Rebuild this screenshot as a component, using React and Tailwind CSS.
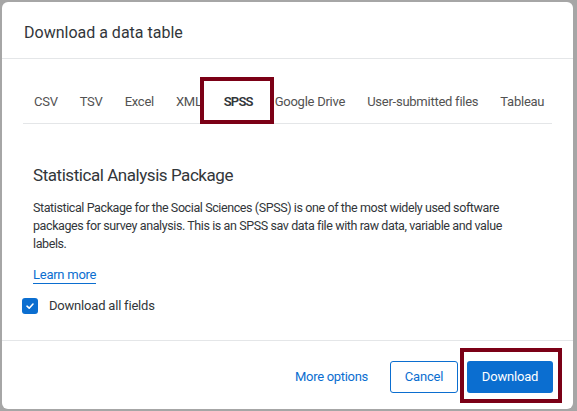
import React from 'react';

const tabs = ['CSV', 'TSV', 'Excel', 'XML', 'SPSS', 'Google Drive', 'User-submitted files', 'Tableau'];

export default function App() {
  return (
    <div className="w-[577px] h-[411px] bg-[#a6a6a6] p-[2px] pr-[4px] font-['Roboto',sans-serif] text-[#32363a]">
      <div className="relative w-full h-full bg-white rounded-[6px] flex flex-col overflow-hidden">
        {/* header */}
        <div className="h-[57px] border-b border-[#e4e6e8] flex items-center pl-[22px] pt-[6px]">
          <h1 className="text-[16px] leading-none text-[#32363a]">Download a data table</h1>
        </div>

        {/* tabs */}
        <div className="px-[21px] pt-[25px]">
          <div className="flex border-b border-[#e4e6e8] h-[40px]">
            {tabs.map((t) => (
              <div
                key={t}
                className={
                  t === 'SPSS'
                    ? 'px-[11px] pt-[8px] whitespace-nowrap text-[13px] tracking-[-0.8px] font-semibold text-[#32363a] border-b-2 border-[#0b6ed0]'
                    : 'px-[11px] pt-[8px] whitespace-nowrap text-[13px] tracking-[-0.25px] text-[#525252]'
                }
              >
                {t}
              </div>
            ))}
          </div>
        </div>

        {/* body */}
        <div className="px-[31px] pt-[39px]">
          <h2 className="text-[17px] leading-[24px] tracking-[-0.45px] text-[#32363a]">Statistical Analysis Package</h2>
          <p className="mt-[12px] text-[12.5px] leading-[18px] tracking-[-0.4px] text-[#32363a] pr-[10px]">
            Statistical Package for the Social Sciences (SPSS) is one of the most widely used software packages for survey analysis. This is an SPSS sav data file with raw data, variable and value labels.
          </p>
          <a className="inline-block mt-[14px] text-[13px] leading-[16px] tracking-[-0.25px] text-[#0b6ed0] border-b border-[#0b6ed0]">Learn more</a>
        </div>
        <label className="flex items-center gap-[11px] pl-[20px] mt-[10px]">
          <span className="w-[16px] h-[16px] rounded-[3px] bg-[#0b6ed0] flex items-center justify-center">
            <svg width="10" height="10" viewBox="0 0 10 10">
              <path d="M2 5.2 L4.2 7.2 L8 3" fill="none" stroke="white" strokeWidth="1.6" strokeLinecap="round" strokeLinejoin="round" />
            </svg>
          </span>
          <span className="text-[13px] tracking-[-0.2px]">Download all fields</span>
        </label>

        {/* footer */}
        <div className="mt-auto h-[69px] border-t border-[#e4e6e8] flex items-center justify-end pr-[20px] pt-[4px]">
          <button className="text-[13px] tracking-[-0.3px] text-[#0b6ed0] mr-[22px]">More options</button>
          <button className="h-[32px] w-[68px] rounded-[3px] border border-[#0b6ed0] text-[13px] tracking-[-0.2px] text-[#0b6ed0] bg-white mr-[9px]">Cancel</button>
          <button className="h-[32px] w-[86px] rounded-[3px] bg-[#0b6ed0] text-[13px] tracking-[-0.2px] text-white">Download</button>
        </div>

        {/* highlight annotations */}
        <div className="absolute left-[198px] top-[75px] w-[74px] h-[47px] border-[4px] border-[#7b0016]" />
        <div className="absolute left-[458px] top-[346px] w-[102px] h-[55px] border-[4px] border-[#7b0016]" />
      </div>
    </div>
  );
}
